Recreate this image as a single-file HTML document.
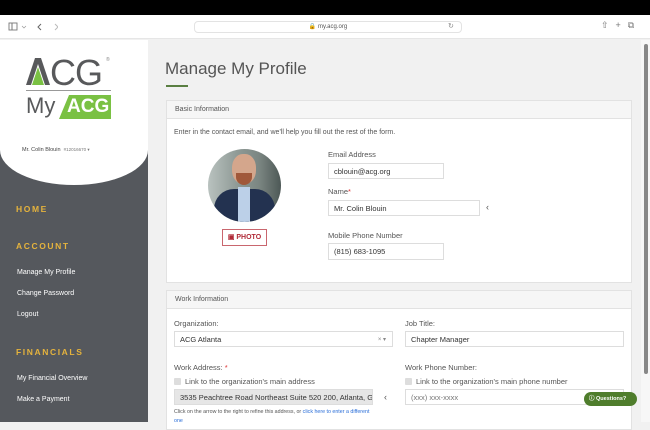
<!DOCTYPE html>
<html><head><style>
*{margin:0;padding:0;box-sizing:border-box}
body{width:650px;height:422px;overflow:hidden;font-family:"Liberation Sans",sans-serif;background:#f1f1f1;position:relative;color:#444}
.abs{position:absolute}
.lbl{font-size:7.5px;color:#555}
.inp{position:absolute;background:#fff;border:1px solid #ddd;font-size:7.5px;color:#333;padding-left:5px;display:flex;align-items:center}
.nav{position:absolute;left:17px;font-size:7px;color:#fff}
.hd{position:absolute;left:16px;font-size:8.5px;font-weight:bold;color:#e5b33d;letter-spacing:1.6px}
</style></head><body>
<div class="abs" style="left:0;top:0;width:650px;height:15px;background:#000"></div>
<div class="abs" style="left:0;top:15px;width:650px;height:24px;background:#fff;border-bottom:1px solid #e6e6e6"></div>
<svg class="abs" style="left:8px;top:21px" width="50" height="12"><rect x="1" y="2" width="8" height="7" fill="none" stroke="#777" stroke-width="0.9"/><line x1="4" y1="2" x2="4" y2="9" stroke="#777"/><path d="M14 5l2 2 2-2" stroke="#999" fill="none" stroke-width=".7"/><path d="M33 3l-3 3 3 3" stroke="#666" fill="none"/><path d="M47 3l3 3-3 3" stroke="#bbb" fill="none"/></svg>
<div class="abs" style="left:194px;top:21px;width:268px;height:12px;border:1px solid #e3e3e3;border-radius:4px;font-size:6px;color:#555;text-align:center;line-height:10px">🔒 my.acg.org</div>
<div class="abs" style="left:448px;top:22px;font-size:7px;color:#888">↻</div>
<div class="abs" style="left:601px;top:20px;font-size:9px;color:#777;letter-spacing:7px">⇧+⧉</div>
<!-- sidebar -->
<div class="abs" style="left:0;top:40px;width:148px;height:382px;background:#55585d"></div>
<div class="abs" style="left:0;top:40px;width:148px;height:145px;background:#fff;border-radius:0 0 74px 74px/0 0 35px 35px"></div>
<svg class="abs" style="left:26px;top:58px" width="24" height="27"><polygon points="0,27 9,0 15,0 24,27 19,27 12,6 5,27" fill="#58595b"/><polygon points="6,27 12,9 18,27" fill="#7ac143"/></svg>
<div class="abs" style="left:50px;top:52px;font-size:36px;color:#58595b;letter-spacing:-1px">CG</div>
<div class="abs" style="left:106px;top:57px;font-size:5px;color:#888">®</div>
<div class="abs" style="left:26px;top:90px;width:85px;height:1px;background:#999"></div>
<div class="abs" style="left:26px;top:93px;font-size:22px;color:#58595b">My</div>
<div class="abs" style="left:59px;top:95px;width:52px;height:24px;background:#7ac143;clip-path:polygon(10px 0,100% 0,100% 100%,0 100%);color:#fff;font-size:19px;font-weight:bold;padding-left:8px;line-height:24px">ACG</div>
<div class="abs" style="left:22px;top:147px;font-size:5.5px;color:#444">Mr. Colin Blouin &nbsp;<span style="font-size:4.5px;color:#777">#12016670 ▾</span></div>
<div class="hd" style="top:204px">HOME</div>
<div class="hd" style="top:241px">ACCOUNT</div>
<div class="nav" style="top:269px">Manage My Profile</div>
<div class="nav" style="top:290px">Change Password</div>
<div class="nav" style="top:311px">Logout</div>
<div class="hd" style="top:347px">FINANCIALS</div>
<div class="nav" style="top:375px">My Financial Overview</div>
<div class="nav" style="top:396px">Make a Payment</div>
<!-- scrollbar -->
<div class="abs" style="left:641px;top:40px;width:9px;height:382px;background:#f7f7f7"></div>
<div class="abs" style="left:644px;top:44px;width:4px;height:330px;background:#888;border-radius:2px"></div>
<!-- main -->
<div class="abs" style="left:165px;top:59px;font-size:17px;color:#555">Manage My Profile</div>
<div class="abs" style="left:166px;top:85px;width:22px;height:2px;background:#5a7f42"></div>
<div class="abs" style="left:166px;top:100px;width:466px;height:183px;background:#fff;border:1px solid #e2e2e2"></div>
<div class="abs" style="left:166px;top:100px;width:466px;height:19px;background:#f6f6f6;border:1px solid #e2e2e2;font-size:7px;color:#555;padding:5px 8px">Basic Information</div>
<div class="abs lbl" style="left:174px;top:129px;font-size:7px">Enter in the contact email, and we'll help you fill out the rest of the form.</div>
<div class="abs" style="left:208px;top:149px;width:73px;height:73px;border-radius:50%;overflow:hidden;background:linear-gradient(90deg,#b9c2bf,#8f9a96 40%,#7b8682 70%,#4d5856)">
<div class="abs" style="left:24px;top:5px;width:24px;height:30px;border-radius:45%;background:#d4a68c"></div>
<div class="abs" style="left:28px;top:24px;width:16px;height:12px;border-radius:0 0 8px 8px;background:#a0583a"></div>
<div class="abs" style="left:6px;top:40px;width:61px;height:45px;border-radius:20px 20px 0 0;background:#233250"></div>
<div class="abs" style="left:30px;top:38px;width:12px;height:35px;background:#bcd0e8"></div>
</div>
<div class="abs" style="left:222px;top:229px;width:45px;height:17px;border:1px solid #c9666e;color:#b02a37;font-size:7px;font-weight:bold;text-align:center;line-height:15px">▣ PHOTO</div>
<div class="abs lbl" style="left:328px;top:150px">Email Address</div>
<div class="inp" style="left:328px;top:163px;width:116px;height:16px">cblouin@acg.org</div>
<div class="abs lbl" style="left:328px;top:187px">Name<span style="color:#d33">*</span></div>
<div class="inp" style="left:328px;top:200px;width:152px;height:16px">Mr. Colin Blouin</div>
<div class="abs" style="left:486px;top:202px;font-size:9px;color:#555">‹</div>
<div class="abs lbl" style="left:328px;top:231px">Mobile Phone Number</div>
<div class="inp" style="left:328px;top:243px;width:116px;height:17px">(815) 683-1095</div>
<!-- work -->
<div class="abs" style="left:166px;top:290px;width:466px;height:140px;background:#fff;border:1px solid #e2e2e2"></div>
<div class="abs" style="left:166px;top:290px;width:466px;height:19px;background:#f6f6f6;border:1px solid #e2e2e2;font-size:7px;color:#555;padding:5px 8px">Work Information</div>
<div class="abs lbl" style="left:174px;top:319px">Organization:</div>
<div class="inp" style="left:174px;top:331px;width:219px;height:16px">ACG Atlanta<span style="position:absolute;right:6px;font-size:6px;color:#888">× ▾</span></div>
<div class="abs lbl" style="left:405px;top:319px">Job Title:</div>
<div class="inp" style="left:405px;top:331px;width:219px;height:16px">Chapter Manager</div>
<div class="abs lbl" style="left:174px;top:363px">Work Address: <span style="color:#d33">*</span></div>
<div class="abs lbl" style="left:174px;top:377px"><span style="display:inline-block;width:7px;height:7px;background:#ddd;border-radius:1px;vertical-align:-1px;margin-right:4px"></span>Link to the organization's main address</div>
<div class="inp" style="left:174px;top:389px;width:199px;height:16px;background:#e6e6e6;overflow:hidden;white-space:nowrap">3535 Peachtree Road Northeast Suite 520 200, Atlanta, Gv</div>
<div class="abs" style="left:384px;top:392px;font-size:9px;color:#555">‹</div>
<div class="abs" style="left:174px;top:408px;font-size:5.3px;color:#555;width:200px;line-height:9px">Click on the arrow to the right to refine this address, or <span style="color:#2a6ed8">click here to enter a different one</span></div>
<div class="abs lbl" style="left:405px;top:363px">Work Phone Number:</div>
<div class="abs lbl" style="left:405px;top:377px"><span style="display:inline-block;width:7px;height:7px;background:#ddd;border-radius:1px;vertical-align:-1px;margin-right:4px"></span>Link to the organization's main phone number</div>
<div class="inp" style="left:405px;top:389px;width:219px;height:16px;color:#777">(xxx) xxx-xxxx</div>
<div class="abs" style="left:584px;top:392px;width:53px;height:14px;background:#4f7d2c;border-radius:7px;color:#fff;font-size:5.5px;font-weight:bold;line-height:14px;padding-left:5px">ⓘ Questions?</div>
</body></html>
